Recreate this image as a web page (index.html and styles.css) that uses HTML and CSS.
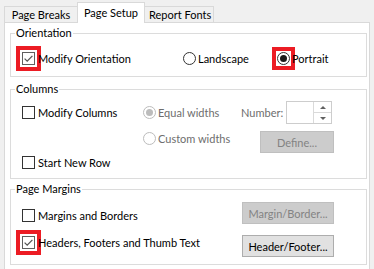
FILE: index.html
```html
<!DOCTYPE html>
<html>
<head>
<meta charset="utf-8">
<link rel="stylesheet" href="styles.css">
</head>
<body>
<div class="tabstrip">
  <div class="tab tab-first">Page Breaks</div>
  <div class="tab tab-active">Page Setup</div>
  <div class="tab tab-last">Report Fonts</div>
</div>
<div class="panel">
  <div class="group g1">
    <span class="title">Orientation</span>
    <div class="check"><span class="box on mark"><svg class="tick" viewBox="0 0 11 11"><path d="M1.6 5.6 L4.2 8.1 L9.4 2.9"/></svg></span><span>Modify Orientation</span></div>
    <div class="radio"><span class="ring"><span class="dot"></span></span><span>Landscape</span></div>
    <div class="radio"><span class="ring mark-r"><span class="dot on"></span></span><span>Portrait</span></div>
  </div>
  <div class="group g2">
    <span class="title">Columns</span>
    <div class="check c-mod"><span class="box"></span><span>Modify Columns</span></div>
    <div class="radio dis r-eq"><span class="ring"><span class="dot on"></span></span><span>Equal widths</span></div>
    <div class="numrow"><span class="numlabel dis">Number:</span><span class="spin"><span class="spin-field"></span><span class="spin-btns"><span class="spin-up"><i class="arr-up"></i></span><span class="spin-down"><i class="arr-down"></i></span></span></span></div>
    <div class="radio dis r-cus"><span class="ring"><span class="dot"></span></span><span>Custom widths</span></div>
    <div class="btn dis b-def">Define...</div>
    <div class="check c-row"><span class="box"></span><span>Start New Row</span></div>
  </div>
  <div class="group g3">
    <span class="title">Page Margins</span>
    <div class="check c-mb"><span class="box"></span><span>Margins and Borders</span></div>
    <div class="btn dis">Margin/Border...</div>
    <div class="check c-hf"><span class="box on mark"><svg class="tick" viewBox="0 0 11 11"><path d="M1.6 5.6 L4.2 8.1 L9.4 2.9"/></svg></span><span>Headers, Footers and Thumb Text</span></div>
    <div class="btn">Header/Footer...</div>
  </div>
</div>
</body>
</html>
```
FILE: styles.css
```css
html, body {
  margin: 0;
  overflow: hidden;
}
body {
  background: #f0f0f0;
  font: 11px/13px "Lato", sans-serif;
  color: #000;
}

/* tabs */
.tabstrip {
  display: flex;
  align-items: flex-end;
  height: 22px;
  padding-left: 4px;
}
.tab {
  box-sizing: border-box;
  height: 16px;
  border-top: 1px solid #d9d9d9;
  background: #f0f0f0;
  display: flex;
  align-items: center;
  justify-content: center;
}
.tab-first {
  width: 73px;
  border-left: 1px solid #d9d9d9;
}
.tab-active {
  width: 68px;
  height: 21px;
  margin-bottom: -1px;
  padding-bottom: 2px;
  border-left: 1px solid #d9d9d9;
  border-right: 1px solid #d9d9d9;
  background: #fff;
  position: relative;
  z-index: 1;
}
.tab-last {
  width: 69px;
  border-right: 1px solid #d9d9d9;
  justify-content: flex-start;
  padding-left: 4px;
}

/* panel */
.panel {
  background: #fff;
  border: 1px solid #d9d9d9;
  border-bottom: 0;
  margin: 0 4px;
  padding: 10px 2px 4px 5px;
}
.group {
  position: relative;
  border: 1px solid #dcdcdc;
  display: grid;
}
.title {
  position: absolute;
  left: 4px;
  top: -8px;
  padding: 0 1px;
  background: #fff;
}

.g1 {
  margin-bottom: 12px;
  padding: 12px 0 5px 11px;
  grid-template-columns: 161px 94px auto;
  grid-template-rows: 25px;
  align-items: center;
}
.g2 {
  margin-bottom: 10px;
  padding: 11px 0 9px 11px;
  grid-template-columns: 121px 98px 1fr;
  grid-template-rows: 23px 29px 16px;
  align-items: center;
}
.g3 {
  padding: 12px 0 7px 11px;
  grid-template-columns: 220px 92px;
  grid-template-rows: 22px 22px;
  row-gap: 11px;
  align-items: center;
}

/* checkbox */
.check {
  display: flex;
  align-items: center;
  gap: 3px;
}
.box {
  flex: none;
  box-sizing: border-box;
  width: 13px;
  height: 13px;
  border: 1px solid #333;
  background: #fff;
  display: flex;
}
.box.on {
  border-color: #5f5f5f;
}
.tick {
  width: 11px;
  height: 11px;
}
.tick path {
  fill: none;
  stroke: #555;
  stroke-width: 1.3;
}
.mark {
  outline: 4px solid #ec1c24;
  outline-offset: 2px;
}

/* radio */
.radio {
  display: flex;
  align-items: center;
  gap: 2px;
}
.ring {
  flex: none;
  width: 13px;
  height: 13px;
  display: flex;
}
.mark-r {
  outline: 4px solid #ec1c24;
  outline-offset: 1px;
}
.dot {
  box-sizing: border-box;
  width: 13px;
  height: 13px;
  border-radius: 50%;
  border: 1px solid #333;
  background: #fff;
  display: flex;
  align-items: center;
  justify-content: center;
}
.dot.on::after {
  content: "";
  width: 7px;
  height: 7px;
  border-radius: 50%;
  background: #1a1a1a;
}
.dis {
  color: #6d6d6d;
}
.dis .dot {
  border-color: #bcbcbc;
}
.dis .dot.on::after {
  background: #bcbcbc;
}

/* columns group placement */
.c-mod { grid-row: 1; grid-column: 1; }
.r-eq { grid-row: 1; grid-column: 2; }
.numrow {
  grid-row: 1;
  grid-column: 3;
  display: flex;
  align-items: center;
}
.numlabel {
  width: 45px;
}
.spin {
  box-sizing: border-box;
  width: 46px;
  height: 23px;
  border: 1px solid #cdcdcd;
  background: #fff;
  display: flex;
}
.spin-field {
  flex: 1;
}
.spin-btns {
  width: 17px;
  display: flex;
  flex-direction: column;
  border-left: 1px solid #dadada;
}
.spin-up,
.spin-down {
  flex: 1;
  display: flex;
  align-items: center;
  justify-content: center;
}
.spin-up {
  border-bottom: 1px solid #dadada;
}
.arr-up,
.arr-down {
  width: 0;
  height: 0;
  border-left: 3px solid transparent;
  border-right: 3px solid transparent;
}
.arr-up {
  border-bottom: 3px solid #606060;
}
.arr-down {
  border-top: 3px solid #606060;
}
.r-cus {
  grid-row: 2;
  grid-column: 2;
  align-self: start;
  margin-top: 8px;
}
.b-def {
  grid-row: 2;
  grid-column: 3;
  align-self: end;
  width: 74px;
  margin-left: 19px;
}
.c-row {
  grid-row: 3;
  grid-column: 1;
  align-self: end;
}

/* page margins placement */
.c-mb {
  align-self: end;
  margin-bottom: 2px;
}
.c-hf {
  align-self: start;
  margin-top: 1px;
}

/* buttons */
.btn {
  box-sizing: border-box;
  height: 22px;
  border: 1px solid #adadad;
  background: #e1e1e1;
  display: flex;
  align-items: center;
  justify-content: center;
}
.btn.dis {
  background: #cccccc;
  border-color: #bfbfbf;
  color: #838383;
}
```
